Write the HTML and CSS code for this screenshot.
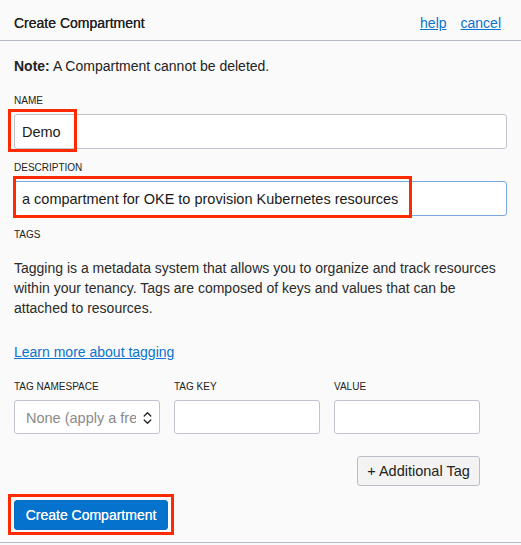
FILE: index.html
```html
<!DOCTYPE html>
<html>
<head>
<meta charset="utf-8">
<link rel="stylesheet" href="styles.css">
</head>
<body>
<div class="panel">
  <header class="panel-header">
    <h1 class="panel-title">Create Compartment</h1>
    <nav class="header-links">
      <a href="#" class="link">help</a>
      <a href="#" class="link">cancel</a>
    </nav>
  </header>
  <main class="panel-body">
    <p class="note"><b>Note:</b> A Compartment cannot be deleted.</p>

    <label class="field-label first">NAME</label>
    <div class="field">
      <div class="input">Demo</div>
      <span class="annot annot-name"></span>
    </div>

    <label class="field-label">DESCRIPTION</label>
    <div class="field">
      <div class="input focused">a compartment for OKE to provision Kubernetes resources</div>
      <span class="annot annot-desc"></span>
    </div>

    <label class="field-label">TAGS</label>
    <p class="tags-text">Tagging is a metadata system that allows you to organize and track resources within your tenancy. Tags are composed of keys and values that can be attached to resources.</p>
    <a href="#" class="link learn">Learn more about tagging</a>

    <div class="tag-row">
      <div class="tag-col">
        <label class="field-label small">TAG NAMESPACE</label>
        <div class="select">
          <span class="select-text">None (apply a free-form tag)</span>
          <svg class="chev" width="9" height="14" viewBox="0 0 9 14"><path d="M1.2 5 L4.5 1.8 L7.8 5 M1.2 9 L4.5 12.2 L7.8 9" fill="none" stroke="#222" stroke-width="1.3" stroke-linecap="round" stroke-linejoin="round"/></svg>
        </div>
      </div>
      <div class="tag-col">
        <label class="field-label small">TAG KEY</label>
        <div class="input tag-input"></div>
      </div>
      <div class="tag-col">
        <label class="field-label small">VALUE</label>
        <div class="input tag-input"></div>
      </div>
    </div>

    <div class="add-row">
      <button class="btn-secondary">+ Additional Tag</button>
    </div>

    <div class="submit-row">
      <div class="field inline">
        <button class="btn-primary">Create Compartment</button>
        <span class="annot annot-btn"></span>
      </div>
    </div>
  </main>
</div>
</body>
</html>
```

FILE: styles.css
```css
* { box-sizing: border-box; }
html, body {
  margin: 0;
  padding: 0;
  background: #fafafa;
}
body {
  font-family: "Liberation Sans", Arial, sans-serif;
  color: #2b2b2b;
  font-size: 14px;
  width: 521px;
  height: 545px;
  overflow: hidden;
}
.panel {
  border-bottom: 1px solid #b7bdc6;
  height: 543px;
}
.panel-header {
  height: 41px;
  border-bottom: 1px solid #b3bac4;
  display: flex;
  align-items: center;
  justify-content: space-between;
  padding: 5px 20px 0 14px;
}
.panel-title {
  margin: 0;
  font-size: 14px;
  font-weight: normal;
  color: #222;
  text-shadow: 0 0 0.3px #222;
}
.header-links {
  display: flex;
  gap: 14px;
  padding-top: 1px;
}
.link {
  color: #0a72d0;
  text-decoration: underline;
  font-size: 14px;
}
.panel-body {
  padding: 0 14px;
}
.note {
  margin: 15px 0 0;
  line-height: 20px;
  color: #222;
}
.note b { font-weight: bold; }
.field-label {
  display: block;
  font-size: 10px;
  line-height: 14px;
  color: #222;
  margin-top: 12px;
  margin-bottom: 6px;
}
.field-label.first { margin-top: 18px; }
.field {
  position: relative;
}
.field.inline { display: inline-block; }
.input {
  height: 35px;
  background: #fff;
  border: 1px solid #c0c5cd;
  border-radius: 3px;
  padding: 1px 7px 0;
  display: flex;
  align-items: center;
  font-size: 14.5px;
  color: #1a1a1a;
  white-space: nowrap;
}
.input.focused { border-color: #7aa9e0; }
.annot {
  position: absolute;
  border: 3px solid #ff2a00;
  pointer-events: none;
}
.annot-name { left: -6px; top: -5px; width: 69px; height: 43px; }
.annot-desc { left: -1px; top: -5px; width: 399px; height: 42px; }
.annot-btn { left: -6px; top: -6px; width: 166px; height: 41px; }
.tags-text {
  margin: 16px 0 0;
  line-height: 20px;
  color: #2b2b2b;
  padding-right: 6px;
}
.learn {
  display: inline-block;
  margin-top: 24px;
  line-height: 20px;
}
.tag-row {
  display: flex;
  gap: 14px;
  margin-top: 18px;
}
.tag-col { width: 146px; }
.field-label.small { margin-top: 0; }
.tag-input { height: 34px; }
.select {
  height: 34px;
  background: #fff;
  border: 1px solid #c0c5cd;
  border-radius: 3px;
  display: flex;
  align-items: center;
  padding: 1px 7px 0 11px;
  gap: 7px;
}
.select-text {
  flex: 1;
  overflow: hidden;
  white-space: nowrap;
  color: #8a8a8a;
  font-size: 14.5px;
}
.chev { flex: none; }
.add-row {
  display: flex;
  justify-content: flex-end;
  padding-right: 27px;
  margin-top: 22px;
}
.btn-secondary {
  height: 30px;
  width: 123px;
  background: #f3f3f3;
  border: 1px solid #b9bfc8;
  border-radius: 3px;
  font-family: "Liberation Sans", Arial, sans-serif;
  font-size: 14.5px;
  color: #222;
  padding: 0;
}
.submit-row {
  margin-top: 14px;
  line-height: 0;
}
.btn-primary {
  height: 30px;
  width: 154px;
  background: #0572ce;
  border: 1px solid #0a6cc2;
  border-radius: 3px;
  color: #fff;
  font-family: "Liberation Sans", Arial, sans-serif;
  font-size: 14px;
  text-shadow: 0 0 0.4px #fff;
  padding: 0;
}
```
